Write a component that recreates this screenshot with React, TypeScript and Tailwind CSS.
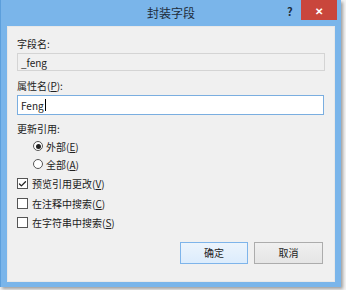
import { Check } from 'lucide-react';

const font = { fontFamily: '"Noto Sans CJK SC", "Noto Sans", sans-serif' };

function Radio({ label, hot, rest, checked }: { label: string; hot: string; rest: string; checked?: boolean }) {
  return (
    <div className="flex h-[18px] items-center pl-[16px]">
      <span className="flex h-[10px] w-[10px] items-center justify-center rounded-full border border-[#555] bg-white">
        {checked && <span className="h-[5px] w-[5px] rounded-full bg-[#222]" />}
      </span>
      <span className="ml-[3px] text-[10px] text-[#222]">
        {label}(<span className="underline">{hot}</span>){rest}
      </span>
    </div>
  );
}

function CheckRow({ label, hot, checked }: { label: string; hot: string; checked?: boolean }) {
  return (
    <div className="flex h-[19.5px] items-center">
      <span className="flex h-[11px] w-[11px] items-center justify-center border border-[#555] bg-white">
        {checked && <Check size={10} strokeWidth={3.5} className="text-[#222]" />}
      </span>
      <span className="ml-[4px] text-[10px] text-[#222]">
        {label}(<span className="underline">{hot}</span>)
      </span>
    </div>
  );
}

export default function App() {
  return (
    <div className="h-[290px] w-[346px] bg-[#f4f4f4]" style={font}>
      <div className="flex h-[287px] w-[341px] flex-col border-l border-[#5c9fdc] bg-[#7ab5ea] shadow-[2px_2px_3px_rgba(0,0,0,0.35)]">
        <div className="relative flex h-[26px] items-center justify-center">
          <span className="text-[12px] text-[#1e2d3c]">封装字段</span>
          <span className="absolute left-[286px] top-[3px] text-[11px] font-bold text-[#1e2d3c]">?</span>
          <span className="absolute left-[300px] top-0 flex h-[20px] w-[36px] items-center justify-center bg-[#c9463c] text-[10px] font-bold text-white">
            ✕
          </span>
        </div>
        <div className="ml-[6px] mr-[6px] flex h-[256px] flex-col border border-[#e8e8e8] bg-[#f0f0f0] px-[9px] pt-[9px] text-[#222]">
          <div className="h-[16px] text-[10px] leading-[16px]">字段名:</div>
          <div className="mt-[1px] flex h-[18px] w-[308px] items-center border border-[#d4d4d4] bg-[#f0f0f0] px-[3px] text-[10px]">_feng</div>
          <div className="mt-[7px] h-[16px] text-[10px] leading-[16px]">
            属性名(<span className="underline">P</span>):
          </div>
          <div className="mt-[1px] flex h-[20px] w-[307px] items-center border border-[#7aaee0] bg-white px-[3px] text-[10px]">
            Feng<span className="ml-[1px] h-[12px] w-px bg-black" />
          </div>
          <div className="mt-[6px] h-[16px] text-[10px] leading-[16px]">更新引用:</div>
          <Radio label="外部" hot="E" rest="" checked />
          <Radio label="全部" hot="A" rest="" />
          <div className="mt-[1px]">
            <CheckRow label="预览引用更改" hot="V" checked />
            <CheckRow label="在注释中搜索" hot="C" />
            <CheckRow label="在字符串中搜索" hot="S" />
          </div>
          <div className="mt-[9px] flex justify-end gap-[6px] pr-[2px]">
            <button className="h-[22px] w-[68px] border border-[#7eb4ea] bg-gradient-to-b from-[#ecf4fc] to-[#dcecfc] text-[10px] text-[#222]">
              确定
            </button>
            <button className="h-[22px] w-[69px] border border-[#acacac] bg-gradient-to-b from-[#f0f0f0] to-[#e5e5e5] text-[10px] text-[#222]">
              取消
            </button>
          </div>
        </div>
      </div>
    </div>
  );
}
